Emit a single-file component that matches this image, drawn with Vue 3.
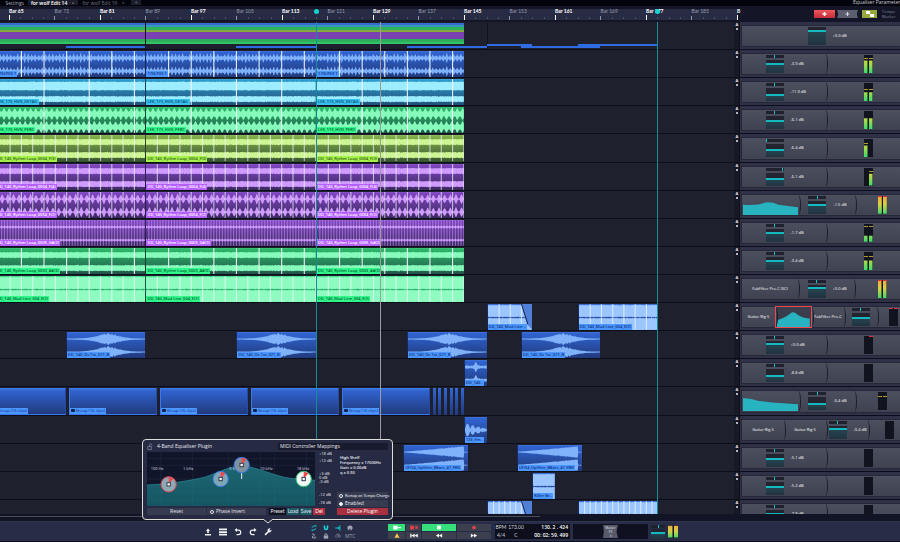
<script setup>
import { ref } from 'vue'

const VIEW = { start: 63.42, span: 128.88 }
const pct = (bar) => ((bar - VIEW.start) / VIEW.span) * 100
const at = (bar) => ({ left: pct(bar) + '%' })
const span = (from, to) => ({ left: pct(from) + '%', width: pct(to) - pct(from) + '%' })

const marks = Array.from({ length: 17 }, (_, i) => ({ bar: 65 + i * 8, major: i % 2 === 0 }))
const ticks = Array.from({ length: 64 }, (_, i) => 65 + i * 2).filter((b) => (b - 65) % 8)

/* ---- waveforms ---- */
const noise = (n) => {
  const v = Math.sin(n * 12.9898 + 4.1) * 43758.5453
  return v - Math.floor(v)
}
const pulse = (b, per, sharp) => Math.pow(Math.abs(Math.cos((b / per) * Math.PI)), sharp)
const bell = (t, mid, w) => Math.exp(-Math.pow((t - mid) / w, 2))
const shapes = {
  beat: (b, t, x) => 1.1 + noise(x) * 0.6 + pulse(b, 0.62, 4) * 4 * (0.3 + 0.7 * noise(Math.round(b / 0.62))),
  band: (b, t, x, ch) => (ch ? 2.4 : 3.8) + noise(x) * 0.8,
  comb: (b, t, x) => 2 + noise(x * 3) * 0.8 + pulse(b, 0.94, 3) * 3.4,
  strip: (b, t, x) => 2.4 + noise(x + 7) * 0.8,
  diamond: (b, t, x) => 0.6 + pulse(b + 0.4, 1, 3) * 4.6 * (0.7 + 0.3 * noise(Math.round(b))),
  thin: (b, t, x) => 0.6 + pulse(b, 0.5, 4) * 1.1,
  full: (b, t, x) => 5.6 + noise(x) * 0.6,
  swell: (b, t, x) => 0.4 + (bell(t, 0.52, 0.17) * 3.4 + bell(t, 0.5, 0.32) * 0.9) * (0.8 + 0.4 * noise(x)) + (Math.abs(t - 0.52) < 0.01 ? 1.6 : 0),
  rise: (b, t, x) => (t > 0.94 ? 0.4 : 0.4 + Math.pow(t, 1.1) * 5.6 * (0.88 + 0.2 * noise(x))),
  blip: (b, t, x) => 0.8 + noise(x) * 1.2 + bell(t, 0.5, 0.07) * 3.6,
  hits: (b, t, x) => 0.8 + Math.abs(Math.sin(t * 13)) * 5.5 * (1 - t) + noise(x)
}
const cache = {}
function wave(kind, from, to) {
  const key = kind + from + '-' + to
  if (cache[key]) return cache[key]
  const w = (to - from) * 6
  const f = shapes[kind]
  const centres = kind === 'hits' ? [13] : [7, 20]
  cache[key] = centres.map((c, ch) => {
    const top = []
    const low = []
    for (let x = 0; x <= w; x += 0.5) {
      const a = f(from + x / 6, x / w, x, ch)
      top.push(x + ' ' + (c - a).toFixed(1))
      low.unshift(x + ' ' + (c + a).toFixed(1))
    }
    return 'M' + top.concat(low).join('L') + 'Z'
  }).join('')
  return cache[key]
}
function cuts(track, clip) {
  const out = []
  if (!track.step) return out
  for (let b = clip.from + (clip.origin ?? 0); b <= clip.to; b += track.step) {
    if (b > clip.from) out.push((b - clip.from) * 6)
  }
  return out
}

const loops = (label) => [
  { from: 62.5, to: 89, label, origin: 0.5 },
  { from: 89, to: 119, label },
  { from: 119, to: 145, label }
]
const one = (db, level, meter, pan = 50) => ({ mods: [{ t: 'vol', db, level, pan }, { t: 'meter', ...meter }] })
const dark = { l: 0, r: 0 }

const osTxt = (from, to) => ({ from, to, label: 'DD_140_Os Txt_021_B', shape: 'swell' })
const group = (from, to) => ({ from, to, label: 'Group (16 clips)', group: true })
const tracks = [
  { tone: 'blue', shape: 'beat', step: 4, clips: loops('170LP03 1'), ...one('-3.9 dB', 33, { l: 70, r: 70, peak: 80 }) },
  { tone: 'cyan', shape: 'band', step: 8, clips: loops('LEK_173_HVN_DETAIL'), ...one('-11.9 dB', 55, { l: 50, r: 50, peak: 62 }) },
  { tone: 'green', shape: 'comb', step: 8, clips: loops('LEK_173_HVN_PERC'), ...one('-6.1 dB', 42, { l: 62, r: 62 }) },
  { tone: 'lime', shape: 'strip', step: 2, clips: loops('DD_140_Rythm Loop_0004_F(3)'), ...one('-6.4 dB', 44, { l: 66, r: 0, peak: 76, only: 'l' }, 3) },
  { tone: 'violet', shape: 'strip', step: 2, clips: loops('DD_140_Rythm Loop_0004_F(4)'), ...one('-6.1 dB', 43, { l: 0, r: 66, peak: 76, only: 'r' }, 97) },
  { tone: 'violet', shape: 'diamond', step: 2, clips: loops('DD_140_Rythm Loop_0054_F(2)'), mods: [{ t: 'eq', d: 'M0 10Q14 11 20 8Q26 6 34 10L53 13V22H0Z' }, { t: 'vol', db: '-1.5 dB', level: 27, pan: 50 }, { t: 'meter', l: 96, r: 96, clip: 'both', hot: true }] },
  { tone: 'violet', shape: 'thin', step: 0.5, clips: loops('DD_140_Rythm Loop_0005_G#(2)'), ...one('-1.7 dB', 29, { l: 34, r: 34, peak: 82 }) },
  { tone: 'green', shape: 'strip', step: 4, clips: loops('DD_140_Rythm Loop_0003_A#(3)'), ...one('-3.4 dB', 33, { l: 53, r: 53, peak: 70 }) },
  { tone: 'mint', shape: 'full', step: 2, clips: loops('DD_140_Mod Line_004_E(2)'), mods: [{ t: 'fx', name: 'FabFilter Pro-C (SC)' }, { t: 'vol', db: '+0.0 dB', level: 20, pan: 50 }, { t: 'meter', l: 96, r: 96, clip: 'both', hot: true }] },
  {
    tone: 'blue', shape: 'full', step: 2,
    clips: [
      { from: 149, to: 157, label: 'DD_140_Mod Line ..', fade: true, pale: true },
      { from: 165, to: 179, label: 'DD_140_Mod Line_004_E(2)', pale: true }
    ],
    mods: [{ t: 'fx', name: 'Guitar Rig 5' }, { t: 'eq', on: true, d: 'M0 14Q12 12 22 6Q27 3 34 8Q42 12 53 12V22H0Z' }, { t: 'fx', name: 'FabFilter Pro-C' }, { t: 'vol', level: 37, pan: 50 }, { t: 'meter', ...dark, clip: 'both' }]
  },
  { tone: 'blue', clips: [osTxt(75, 89), osTxt(105, 119), osTxt(135, 149), osTxt(155, 169)], ...one('+0.0 dB', 23, { ...dark, clip: 'right' }) },
  { tone: 'blue', clips: [{ from: 145, to: 149, label: 'DD_140..', shape: 'blip' }], ...one('-8.8 dB', 55, dark) },
  {
    tone: 'blue',
    clips: [{ from: 61.8, to: 75, label: 'Group (16 clips)', group: true }, group(75.5, 91), group(91.5, 107), group(107.5, 123), group(123.5, 139), ...[139.5, 140.5, 141.5, 142.5, 143.5, 144.5].map((b) => ({ from: b, to: b + 0.5, slice: true }))],
    mods: [{ t: 'eq', d: 'M0 7L8 8L14 10L28 12L53 14V22H0Z' }, { t: 'vol', db: '-6.4 dB', level: 52, pan: 50 }, { t: 'meter', ...dark, peak: 76 }]
  },
  { tone: 'blue', clips: [{ from: 145, to: 149, label: '126_Em..', shape: 'hits' }], mods: [{ t: 'fx', name: 'Guitar Rig 5' }, { t: 'fx', name: 'Guitar Rig 5' }, { t: 'vol', db: '-0.4 dB', level: 23, pan: 50 }, { t: 'meter', ...dark }] },
  { tone: 'blue', clips: [{ from: 134.3, to: 145.65, label: 'UFO4_Uplifter_8Bars_47_FRK', shape: 'rise' }, { from: 154.3, to: 165.7, label: 'UFO4_Uplifter_8Bars_47_FRK', shape: 'rise' }], ...one('-5.1 dB', 38, dark) },
  { tone: 'blue', clips: [{ from: 157, to: 161, label: 'Killer Br..', shape: 'full', pale: true }], ...one('-5.2 dB', 38, dark) },
  { tone: 'blue', shape: 'full', step: 1, clips: [{ from: 149, to: 157, fade: true, pale: true }, { from: 165, to: 179, pale: true }], ...one('-7.8 dB', 30, dark) }
]

const stripes = ['s-blue', 's-sky', 's-green', 's-olive', 's-violet', 's-green2']
const overview = [
  { from: 75, to: 89 }, { from: 105, to: 119 }, { from: 135, to: 149 },
  { from: 149, to: 157, up: true }, { from: 155, to: 169 }, { from: 165, to: 179, up: true }
]

const scale = ['+18 dB', '+12 dB', '+3 dB', '0 dB', '-3 dB', '-12 dB', '-18 dB']
const bands = [
  { x: 65, y: 97, c: '#d8404f', f: '#8fa9b4' },
  { x: 221, y: 81, c: '#2f74e0', f: '#7fa6b4' },
  { x: 284, y: 39, c: '#2f74e0', f: '#7f92a2' },
  { x: 470, y: 81, c: '#22c065', f: '#f2f6f4' }
]
const freqs = [[11, '100 Hz'], [108, '1 kHz'], [247, '5 kHz'], [339, '10 kHz'], [449, '18 kHz']]

const remap = ref(false)
const enabled = ref(true)
const phase = ref(false)
</script>

<template>
  <main class="daw">
    <nav class="tabs" aria-label="Open edits">
      <button class="tab first">Settings</button>
      <button class="tab active">for wolf Edit 14 <i>×</i></button>
      <button class="tab">for wolf Edit 16 <i>×</i></button>
      <button class="tab add">+</button>
      <span class="param">Equaliser Parameter (</span>
    </nav>

    <header class="head">
      <div class="ruler">
        <i v-for="b in ticks" :key="b" class="tick" :style="at(b)"></i>
        <span v-for="m in marks" :key="m.bar" class="mark" :class="{ major: m.major }" :style="at(m.bar)">{{ m.bar > 190 ? 'B' : 'Bar ' + m.bar }}</span>
        <i class="flag" :style="at(119)"></i>
        <i class="flag" :style="at(179)"></i>
      </div>
      <div class="tools">
        <button class="tool red" aria-label="Record"><svg viewBox="0 0 15 8"><path d="M7.500 2v4M5.500 4h4" stroke="#fff" stroke-width="1.400" /></svg></button>
        <button class="tool" aria-label="Add"><svg viewBox="0 0 15 8"><path d="M7.500 2v4M5.500 4h4" stroke="#d5d8e2" stroke-width="1" /></svg></button>
        <button class="tool olive" aria-label="Link">
          <svg viewBox="0 0 15 8"><path d="M4 1h4v3H4zM8 4h4v3H8z" fill="#fff" /></svg>
        </button>
        <span class="tempo">Tempo<br />Marker</span>
      </div>
    </header>

    <section class="tracks">
      <div class="row">
        <div class="lane">
          <div class="stack" :style="span(62.5, 145)">
            <i v-for="s in stripes" :key="s" :class="s"></i>
          </div>
          <i class="cut" :style="at(89)"></i>
          <i class="cut" :style="at(149)"></i>
          <i v-for="(o, i) in overview" :key="i" class="mini" :class="{ up: o.up }" :style="span(o.from, o.to)"></i>
        </div>
        <div class="gutter"><b>A</b><i></i></div>
        <div class="mixer">
          <div class="plate">
            <div class="mod">
              <input class="fader tall" type="range" aria-label="Master volume" value="75" :style="{ '--lv': '25%' }" />
              <span class="db">+0.0 dB</span>
            </div>
          </div>
        </div>
      </div>

      <div v-for="(t, ti) in tracks" :key="ti" class="row">
        <div class="lane">
          <div v-for="(c, ci) in t.clips" :key="ci" class="clip" :class="[t.tone, { pale: c.pale, grouped: c.group, slice: c.slice }]" :style="span(c.from, c.to)">
            <svg v-if="c.shape || t.shape" class="wave" :viewBox="`0 0 ${(c.to - c.from) * 6} 26`" preserveAspectRatio="none">
              <path :d="wave(c.shape || t.shape, c.from, c.to)" />
              <line v-for="x in cuts(t, c)" :key="x" :x1="x" :x2="x" y1="0" y2="26" :class="{ faint: t.step < 1, soft: t.step === 1 || t.step === 2 }" />
              <template v-if="c.fade">
                <path class="shade" d="M36 0H48V26L42 20Z" />
                <path class="edge" d="M36 0L43 20" />
              </template>
            </svg>
            <span v-if="c.label" class="name"><i v-if="c.group" class="dot"></i>{{ c.label }}</span>
          </div>
        </div>
        <div class="gutter"><b>A</b><i></i></div>
        <div class="mixer">
          <div class="plate">
            <div v-for="(m, mi) in t.mods" :key="mi" class="mod" :class="{ eqmod: m.t === 'eq', on: m.on }">
              <template v-if="m.t === 'vol'">
                <span class="strip">
                  <input class="pan" type="range" aria-label="Pan" :value="m.pan" :style="{ '--pan': m.pan + '%' }" />
                  <input class="fader" type="range" aria-label="Volume" :value="100 - m.level" :style="{ '--lv': m.level + '%' }" />
                </span>
                <span v-if="m.db" class="db">{{ m.db }}</span>
              </template>
              <span v-else-if="m.t === 'meter'" class="meter" :class="{ hot: m.hot }">
                <span v-for="s in ['l', 'r']" :key="s" class="bar">
                  <i class="fill" :style="{ '--gap': 100 - m[s] + '%' }"></i>
                  <i v-if="m.peak && (!m.only || m.only === s)" class="peak" :style="{ bottom: m.peak + '%' }"></i>
                  <i v-if="m.clip === 'both' || (m.clip && s === 'r')" class="over"></i>
                </span>
              </span>
              <svg v-else-if="m.t === 'eq'" class="eq" viewBox="0 0 53 22" preserveAspectRatio="none"><path :d="m.d" /></svg>
              <button v-else class="fx">{{ m.name }}</button>
            </div>
          </div>
        </div>
      </div>

      <div class="cursors">
        <i class="teal" :style="at(119)"></i>
        <i class="grey" :style="at(130.3)"></i>
        <i class="teal" :style="at(179)"></i>
      </div>
    </section>

    <div class="scroll"><i></i></div>

    <footer class="foot">
      <div class="icons">
        <button aria-label="Export"><svg viewBox="0 0 16 16"><path d="M8 1l4 5H9.700v4H6.300V6H4zM2 12h12v3H2z" /></svg></button>
        <button aria-label="List"><svg viewBox="0 0 16 16"><path d="M0 1h16v3.500H0zM0 6.300h16v3.500H0zM0 11.600h16V15H0z" /></svg></button>
        <button aria-label="Undo"><svg viewBox="0 0 16 16"><path class="ln" d="M4 4h5a4.500 4.500 0 0 1 0 9H5" /><path d="M6 0v8L1 4z" /></svg></button>
        <button aria-label="Redo"><svg viewBox="0 0 16 16"><path class="ln" d="M12 4H7a4.500 4.500 0 0 0 0 9h4" /><path d="M10 0v8l5-4z" /></svg></button>
        <button aria-label="Plugin settings"><svg viewBox="0 0 16 16"><path d="M10 1a4 4 0 0 1 3 0l-2 3 1 1.500L15 3.500a4.500 4.500 0 0 1-5.500 5.200L3.500 15 1 12.500l6.300-6A4.500 4.500 0 0 1 10 1z" /></svg></button>
      </div>

      <div class="sync">
        <button class="lit" aria-label="Loop"><svg viewBox="0 0 16 16"><path class="ln" d="M3 7a5 5 0 0 1 8-3M13 9a5 5 0 0 1-8 3" /><path d="M10 0h4v6zM6 16H2v-6z" /></svg></button>
        <button class="lit" aria-label="Snap"><svg viewBox="0 0 16 16"><path class="ln wide-ln" d="M4 1v7a4 4 0 0 0 8 0V1" /></svg></button>
        <button class="lit" aria-label="Follow"><svg viewBox="0 0 16 16"><path class="ln" d="M1 8h11M13 1v14M8 5l3 3-3 3" /></svg></button>
        <button aria-label="MIDI"><svg viewBox="0 0 16 16"><path d="M8 1a7 7 0 0 1 7 7l-2 6h-2v-4H9v4H7v-4H5v4H3L1 8a7 7 0 0 1 7-7z" /></svg></button>
        <button aria-label="Punch"><svg viewBox="0 0 16 16"><path class="ln" d="M3 3h5v5M4 8v5h9M10 9l3 4" /></svg></button>
        <button aria-label="Lock"><svg viewBox="0 0 16 16"><path d="M2 7h12v8H2z" /><path class="ln" d="M5 8V5a3 3 0 0 1 6 0v3" /></svg></button>
        <button aria-label="Click"><svg viewBox="0 0 16 16"><path class="ln thin" d="M4 13a6 6 0 1 1 8 0M5 8h6M8 5l3 3-3 3" /></svg></button>
        <button>MTC</button>
      </div>

      <div class="transport">
        <button class="go" aria-label="Auto record"><svg viewBox="0 0 16 8"><path d="M2 1h7v6H2zM10 3h4v2h-4z" fill="#fff" /></svg></button>
        <button aria-label="Punch record"><svg viewBox="0 0 16 8"><path d="M2 1h6v6H2zM10 2h4v4h-4z" fill="#e2404a" /></svg></button>
        <button class="go" aria-label="Stop"><svg viewBox="0 0 16 8"><path d="M5 1h6v6H5z" fill="#fff" /></svg></button>
        <button aria-label="Record"><svg viewBox="0 0 16 8"><circle cx="8" cy="4" r="3" fill="#e2404a" /></svg></button>
        <button aria-label="Panic"><svg viewBox="0 0 16 8"><path d="M8 0l4 7.500H4z" fill="#f3c84a" /></svg></button>
        <button aria-label="To start"><svg viewBox="0 0 16 8"><path d="M2 1h2v6H2zM9 1v6L4 4zM14 1v6L9 4z" fill="#fff" /></svg></button>
        <button aria-label="Rewind"><svg viewBox="0 0 16 8"><path d="M8 1v6L3 4zM13 1v6L8 4z" fill="#fff" /></svg></button>
        <button aria-label="Forward"><svg viewBox="0 0 16 8"><path d="M3 1v6l5-3zM8 1v6l5-3z" fill="#fff" /></svg></button>
      </div>

      <div class="readout">
        <span>BPM</span><span>173.00</span><b>130. 2 . 424</b>
        <span>4/4</span><span>C</span><b>00: 02: 59. 499</b>
      </div>

      <div class="rack"><button>Master<br />FX<br />▾</button></div>

      <div class="out">
        <span class="strip">
          <input class="pan" type="range" aria-label="Output pan" value="50" :style="{ '--pan': '50%' }" />
          <input class="fader" type="range" aria-label="Output volume" value="65" :style="{ '--lv': '35%' }" />
        </span>
        <span class="meter hot">
          <span class="bar"><i class="fill" :style="{ '--gap': '10%' }"></i></span>
          <span class="bar"><i class="fill" :style="{ '--gap': '10%' }"></i></span>
        </span>
      </div>

      <aside class="popup">
        <div class="left">
          <h2>
            <svg viewBox="0 0 12 16"><path d="M1 8h8v7H1z" fill="none" stroke="#8b90a5" stroke-width="1.500" /><path d="M5 8V4a2.500 2.500 0 0 1 5 0v2" fill="none" stroke="#8b90a5" stroke-width="1.500" /></svg>
            4-Band Equaliser Plugin
          </h2>
          <div class="plot">
            <svg class="graph" viewBox="0 0 504 162">
              <defs>
                <linearGradient id="eqfill" x1="0" y1="0" x2="0" y2="1">
                  <stop offset="0" stop-color="#1d6673" />
                  <stop offset="1" stop-color="#155562" />
                </linearGradient>
              </defs>
              <path d="M42 0V162M137 0V162M245 0V162M340 0V162M382 0V162M478 0V162M0 20H504M0 40H504M0 81H504M0 121H504M0 142H504" stroke="#1e2740" stroke-width="2" fill="none" />
              <path d="M0 99C60 97 120 88 172 76C210 64 245 42 284 42C330 44 380 72 430 79C460 82 480 83 504 85V162H0Z" fill="url(#eqfill)" />
              <path d="M42 100V162M137 88V162M245 60V162M340 60V162M382 72V162M478 84V162M0 121H504M0 142H504" stroke="#206d78" stroke-width="1" fill="none" />
              <path d="M0 99C60 97 120 88 172 76C210 64 245 42 284 42C330 44 380 72 430 79C460 82 480 83 504 85" stroke="#2a8e98" stroke-width="2" fill="none" />
              <text v-for="f in freqs" :key="f[0]" :x="f[0]" y="55">{{ f[1] }}</text>
              <path d="M284 39V81" stroke="#e8eef0" stroke-width="3" />
              <g v-for="b in bands" :key="b.x" :transform="`translate(${b.x} ${b.y})`">
                <circle r="23" :fill="b.f" :stroke="b.c" stroke-width="3" />
                <path d="M0 0V-22A22 22 0 0 1 14 -17Z" fill="#f0484e" />
                <rect x="-5" y="-5" width="10" height="10" fill="#fff" stroke="#333a48" stroke-width="3" />
              </g>
            </svg>
            <ul class="scale"><li v-for="s in scale" :key="s">{{ s }}</li></ul>
          </div>
          <div class="acts">
            <button class="wide">Reset</button>
            <label class="wide"><input v-model="phase" type="checkbox" />Phase Invert</label>
            <span class="set">Preset</span>
            <button class="sea">Load</button>
            <button class="sea">Save</button>
            <button class="del">Del</button>
          </div>
        </div>
        <div class="right">
          <h3>MIDI Controller Mappings</h3>
          <p>High Shelf<br />Frequency = 17000Hz<br />Gain = 0.00dB<br />q = 0.50</p>
          <label class="tight"><input v-model="remap" type="checkbox" />Remap on Tempo Change</label>
          <label><input v-model="enabled" type="checkbox" />Enabled</label>
          <button class="del">Delete Plugin</button>
        </div>
        <svg class="arrow" viewBox="0 0 10 5"><path d="M0 0L5 4L10 0" /></svg>
      </aside>
    </footer>
  </main>
</template>

<style>
body { background: #0d0f1b; }
</style>

<style scoped>
* { box-sizing: border-box; }
button, input { font: inherit; color: inherit; border: 0; padding: 0; margin: 0; background: none; border-radius: 0; }
i, b { font-style: normal; }
.daw {
  height: 100vh; display: flex; flex-direction: column; overflow: hidden;
  font: 5px/6px "Open Sans", "Noto Sans", sans-serif; color: #e6e8f0; background: #0d0f1b;
}
.tabs { display: flex; height: 6px; background: #02030b; color: #75798a; overflow: hidden; }
.tab { padding: 0 4px 0 3px; height: 5px; line-height: 4px; text-align: left; white-space: nowrap; }
.tab i { margin-left: 3px; color: #6d7183; }
.tab.first { width: 28px; padding: 0 4px 0 0; color: #a8abb8; font-size: 5px; text-align: right; }
.tab.active { background: #1d1e2b; color: #fff; margin-right: 1px; font-weight: 600; }
.tab.add { background: #1d1e2b; margin-left: 2px; padding: 0 4px; }
.param { margin-left: auto; width: 47px; white-space: nowrap; line-height: 4px; color: #c9ccd6; }

.head, .row { display: grid; grid-template-columns: minmax(0, 1fr) 7px 160px; }
.head { height: 16px; background: #141627; padding: 3px 0 2px; }
.ruler { position: relative; background: #272b44; box-shadow: 5px 0 #272b44; }
.mark { position: absolute; top: 0; height: 11px; white-space: nowrap; color: #9a9eae; font: 5px/5px Lato, sans-serif; }
.mark::before { content: ""; position: absolute; left: 0; bottom: 0; width: 1px; height: 4px; background: #8f94a8; }
.mark.major { color: #fff; font-weight: 700; }
.mark.major::before { height: 5px; background: #fff; }
.tick { position: absolute; bottom: 1px; width: 1px; height: 2px; background: #4b5068; }
.flag { position: absolute; top: 0; width: 5px; height: 5px; margin-left: -2px; border-radius: 3px; background: #14d3cf; z-index: 1; }
.tools { grid-column: 3; display: flex; gap: 2px; padding: 1px 0 1px 74px; }
.tool { width: 21px; flex: none; background: #5a5e6e; height: 8px; clip-path: polygon(0 0, 100% 0, 94% 50%, 100% 100%, 0 100%, 6% 50%); }
.tool.red { background: linear-gradient(#f2565a, #c22d3c); clip-path: none; }
.tool.olive { background: #97a83f; width: 15px; margin-left: 2px; clip-path: none; }
.tool svg { display: block; width: 15px; height: 8px; margin: 0 auto; }
.tempo { font: 4px/5px "Open Sans", sans-serif; margin: -1px 0; color: #8387a0; padding-left: 3px; }

.tracks { position: relative; flex: 1; min-height: 0; overflow: hidden; display: grid; grid-auto-rows: calc(100% / 17.5); align-content: start; }
.row { border-bottom: 1px solid #0c0e1a; background: #10121f; }
.lane { position: relative; background: #1f202d; overflow: hidden; box-shadow: 1px 0 #1f202d; }
.gutter { display: flex; flex-direction: column; align-items: center; gap: 1px; padding: 1px 0 0 2px; line-height: 4px; background: #171926; border-right: 1px solid #0d0f1b; }
.gutter b { font-size: 4px; }
.gutter i { width: 2px; height: 2px; background: #e6e8f0; border-radius: 1px; }

.stack { position: absolute; top: 1px; bottom: 5px; display: flex; flex-direction: column; }
.stack i { flex: 2; }
.s-blue { background: #376bd0; }
.s-sky { background: #3798bd; }
.s-green { background: #2fb25e; }
.stack .s-green { flex: 3; }
.s-olive { background: #86a840; }
.stack .s-violet { flex: 8; background: #7a41b2; }
.stack .s-green2 { flex: 5; background: linear-gradient(#2cae5c 0 50%, #26964f 50% 65%, #32c568 65%); }
.cut { position: absolute; top: 1px; bottom: 0; width: 1px; background: #10121c; }
.mini { position: absolute; bottom: 1px; height: 2px; background: #2f6be2; }
.mini.up { bottom: 3px; }

.clip { position: absolute; top: 1px; bottom: 0; overflow: hidden; border-left: 1px solid rgba(10, 14, 34, .6); background: linear-gradient(var(--a), var(--b)); box-shadow: inset 0 1px rgba(255, 255, 255, .06); }
.blue { --a: #3166d6; --b: #213a7c; --w: #7fb2fb; --n: #4b96ff; --t: #0e2f7a; }
.blue.pale { --w: #9cc6ff; }
.cyan { --a: #2d9fd0; --b: #215079; --w: #9decff; --n: #38c2f2; --t: #0b4668; }
.green { --a: #2bbd6a; --b: #22564a; --w: #86fbbb; --n: #30f78a; --t: #0c5a34; }
.lime { --a: #86b44b; --b: #37542f; --w: #cdf594; --n: #a5f24a; --t: #33591a; }
.violet { --a: #8146c4; --b: #3c2a62; --w: #cf9bff; --n: #b65fff; --t: #fff; }
.mint { --a: #35dd83; --b: #1f8d58; --w: #8efcc1; --n: #30f78a; --t: #0c5a34; }
.wave { position: absolute; inset: 0; width: 100%; height: 100%; display: block; }
.wave path { fill: var(--w); }
.wave line { stroke: #f4fbff; stroke-opacity: .9; stroke-width: 1.2; }
.wave line.soft { stroke-opacity: .65; }
.wave line.faint { stroke: var(--w); stroke-opacity: .5; }
.wave .shade { fill: #4f7fd6; }
.wave .edge { fill: none; stroke: #14204a; stroke-width: 1; }
.clip.grouped { border: 1px solid #3a78ee; border-right-color: #234ba6; }
.clip.slice { border-left-width: 0; }
.name { position: absolute; left: 0; bottom: 0; height: 6px; padding: 0 1px; white-space: nowrap; background: var(--n); color: var(--t); font-size: 4px; font-weight: 600; }
.dot { display: inline-block; width: 4px; height: 3px; margin-right: 1px; background: #0d2152; border-radius: 1px; vertical-align: middle; }
.grouped .name { font-weight: 400; }

.mixer { overflow: hidden; background: #2e3147; padding: 3px 0 2px 1px; display: grid; }
.plate { width: 170px; display: flex; min-height: 0; background: linear-gradient(#4c4f5e, #3f4250); border: 1px solid #262839; }
.mod { flex: 1 1 0; min-width: 0; position: relative; display: flex; align-items: center; justify-content: center; gap: 7px; }
.mod + .mod::before { content: ""; position: absolute; left: -3px; top: 0; bottom: 0; width: 4px; border-right: 1px solid #1b1d2b; border-radius: 0 50% 50% 0 / 0 50% 50% 0; z-index: 1; }
.eqmod { padding: 1px 1px 0; align-items: stretch; }
.eqmod.on { border: 1px solid #f04a50; background: #3a3d4c; z-index: 2; margin: -1px 0; }
.eq { width: 100%; height: 100%; display: block; }
.eq path { fill: #27b4c0; }
.strip { display: flex; flex-direction: column; gap: 2px; flex: none; width: 18px; }
.pan, .fader { appearance: none; display: block; width: 100%; outline: none; }
.pan { height: 3px; background: linear-gradient(#14c5cd, #14c5cd) var(--pan) 0 / 1px 3px no-repeat #20212e; }
.fader { height: 13px; background: linear-gradient(#23242f 0 calc(var(--lv) - 1px), #14b9c0 calc(var(--lv) - 1px) calc(var(--lv) + 1px), #254450 calc(var(--lv) + 1px), #22323f); }
.fader.tall { width: 18px; height: 18px; }
.pan::-webkit-slider-thumb, .fader::-webkit-slider-thumb { appearance: none; width: 1px; height: 1px; background: transparent; }
.db { font-size: 4px; width: 12px; white-space: nowrap; color: #fff; }
.fx { font-size: 4px; white-space: nowrap; color: #fff; }
.meter { display: flex; gap: 1px; width: 9px; height: 18px; background: #11131f; flex: none; }
.bar { position: relative; flex: 1; }
.fill { position: absolute; inset: 0; background: linear-gradient(#e2c93e, #a9d84a 50%, #39dc6c); clip-path: inset(var(--gap) 0 0 0); }
.hot .fill { background: linear-gradient(#f0a83c, #d8cf45 45%, #45d96a); }
.peak { position: absolute; left: 0; right: 0; height: 1px; background: #b09a2c; }
.over { position: absolute; left: 0; right: 0; top: 0; height: 1px; background: #e02f3c; }

.cursors { position: absolute; top: 0; bottom: 0; left: 0; right: 167px; pointer-events: none; }
.cursors i { position: absolute; top: 0; bottom: 0; width: 1px; }
.cursors .teal { background: #128d96; }
.cursors .grey { background: #9b9ba0; }

.scroll { height: 7px; padding-top: 2px; background: #111425; }
.scroll i { display: block; width: 60%; height: 1px; background: #4a4b57; }

.foot { position: relative; height: 21px; display: flex; align-items: center; padding: 0 0 0 204px; background: #272c47; border-bottom: 1px solid #0d0f1b; border-top: 1px solid #30354f; }
.foot button { display: block; }
.icons { display: flex; gap: 7px; }
.icons svg { display: block; width: 8px; height: 8px; fill: #f0f2f6; }
.ln { fill: none; stroke: currentColor; stroke-width: 2.5; }
.icons .ln { fill: none; stroke: #f0f2f6; }
.ln.thin { stroke-width: 1.5; }
.ln.wide-ln { stroke-width: 4; }
.sync { display: grid; grid-template-columns: repeat(4, 9px); gap: 2px 3px; margin-left: 37px; color: #9fa3b3; }
.sync button { height: 6px; line-height: 6px; }
.sync svg { display: block; width: 6px; height: 6px; margin: 0 auto; fill: currentColor; }
.sync .lit { color: #14d3dc; }
.transport { display: grid; grid-template-columns: 17px 15px 34px 34px; gap: 1px; margin-left: 34px; }
.transport button { height: 7px; background: #3c3f4e; }
.transport .go { background: #35e07c; }
.transport svg { display: block; height: 5px; width: 10px; margin: 0 auto; }
.readout { display: grid; grid-template-columns: 12px 16px 45px; gap: 1px; margin-left: 4px; background: #0d0f1c; text-align: center; height: 15px; font: 5px/7px Lato, sans-serif; color: #cfd2de; }
.readout b { font: 600 5px/7px "Open Sans", sans-serif; color: #fff; text-align: right; padding-right: 2px; white-space: nowrap; }
.rack { margin-left: 3px; width: 75px; height: 15px; background: #0f1120; display: grid; place-items: center; }
.rack button { width: 15px; height: 13px; background: #565a69; font-size: 3px; line-height: 4px; clip-path: polygon(0 0, 100% 0, 90% 50%, 100% 100%, 0 100%, 6% 50%); }
.out { display: flex; gap: 3px; margin-left: 3px; }
.out .strip { width: 14px; gap: 1px; }
.out .fader { height: 10px; }
.out .meter { height: 13px; width: 10px; }

.popup { position: absolute; left: 142px; bottom: 21px; width: 251px; display: grid; grid-template-columns: 190px minmax(0, 1fr); background: #262b43; border: 1px solid #deded8; border-radius: 4px; padding: 3px 4px 4px; }
.popup h2, .popup h3, .popup p, .popup ul { margin: 0; padding: 0; font-size: 5px; font-weight: 400; list-style: none; }
.popup h2 { display: flex; gap: 4px; align-items: center; height: 6px; white-space: nowrap; margin-bottom: 3px; }
.popup h2 svg { width: 6px; height: 7px; }
.plot { display: grid; grid-template-columns: 168px 1fr; gap: 4px; }
.graph { display: block; width: 168px; height: 54px; background: #11152a; }
.graph text { fill: #d8dce4; font-size: 12px; }
.scale { display: grid; grid-template-rows: 7px 13px 4px 4px 13px 8px 5px; line-height: 4px; }
.scale li { font-size: 4px; white-space: nowrap; }
.acts { display: flex; gap: 1px; margin-top: 2px; }
.acts > *, .right label, .right .del { height: 7px; line-height: 7px; flex: none; text-align: center; }
.wide { width: 59px; background: #373b4f; }
.set, .sea, .acts .del { width: 12px; font-family: Lato, sans-serif; }
.acts .set { width: 17px; margin-left: 2px; background: #10121f; }
.sea { background: #1c5a66; }
.del { background: #a8303f; color: #fff; }
.popup label { display: flex; align-items: center; gap: 2px; white-space: nowrap; }
.popup label.wide { padding-left: 3px; }
.popup input { appearance: none; width: 4px; height: 4px; border: 1px solid #e6e8f0; border-radius: 2px; flex: none; }
.popup input:checked { background: #fff; }
.right { display: flex; flex-direction: column; gap: 1px; }
.popup h3 { margin-left: -59px; padding-left: 2px; height: 7px; background: #181b2d; z-index: 1; white-space: nowrap; }
.popup .right p { font-size: 4px; line-height: 5px; margin-top: 4px; margin-bottom: auto; padding-left: 3px; font-weight: 600; white-space: nowrap; }
.right label { background: #373b4f; padding-left: 2px; }
.right .tight { font: 4px/7px Lato, sans-serif; }
.arrow { position: absolute; left: 120px; top: 100%; width: 10px; height: 5px; }
.arrow path { fill: #262b43; stroke: #deded8; stroke-width: 1; }
</style>
